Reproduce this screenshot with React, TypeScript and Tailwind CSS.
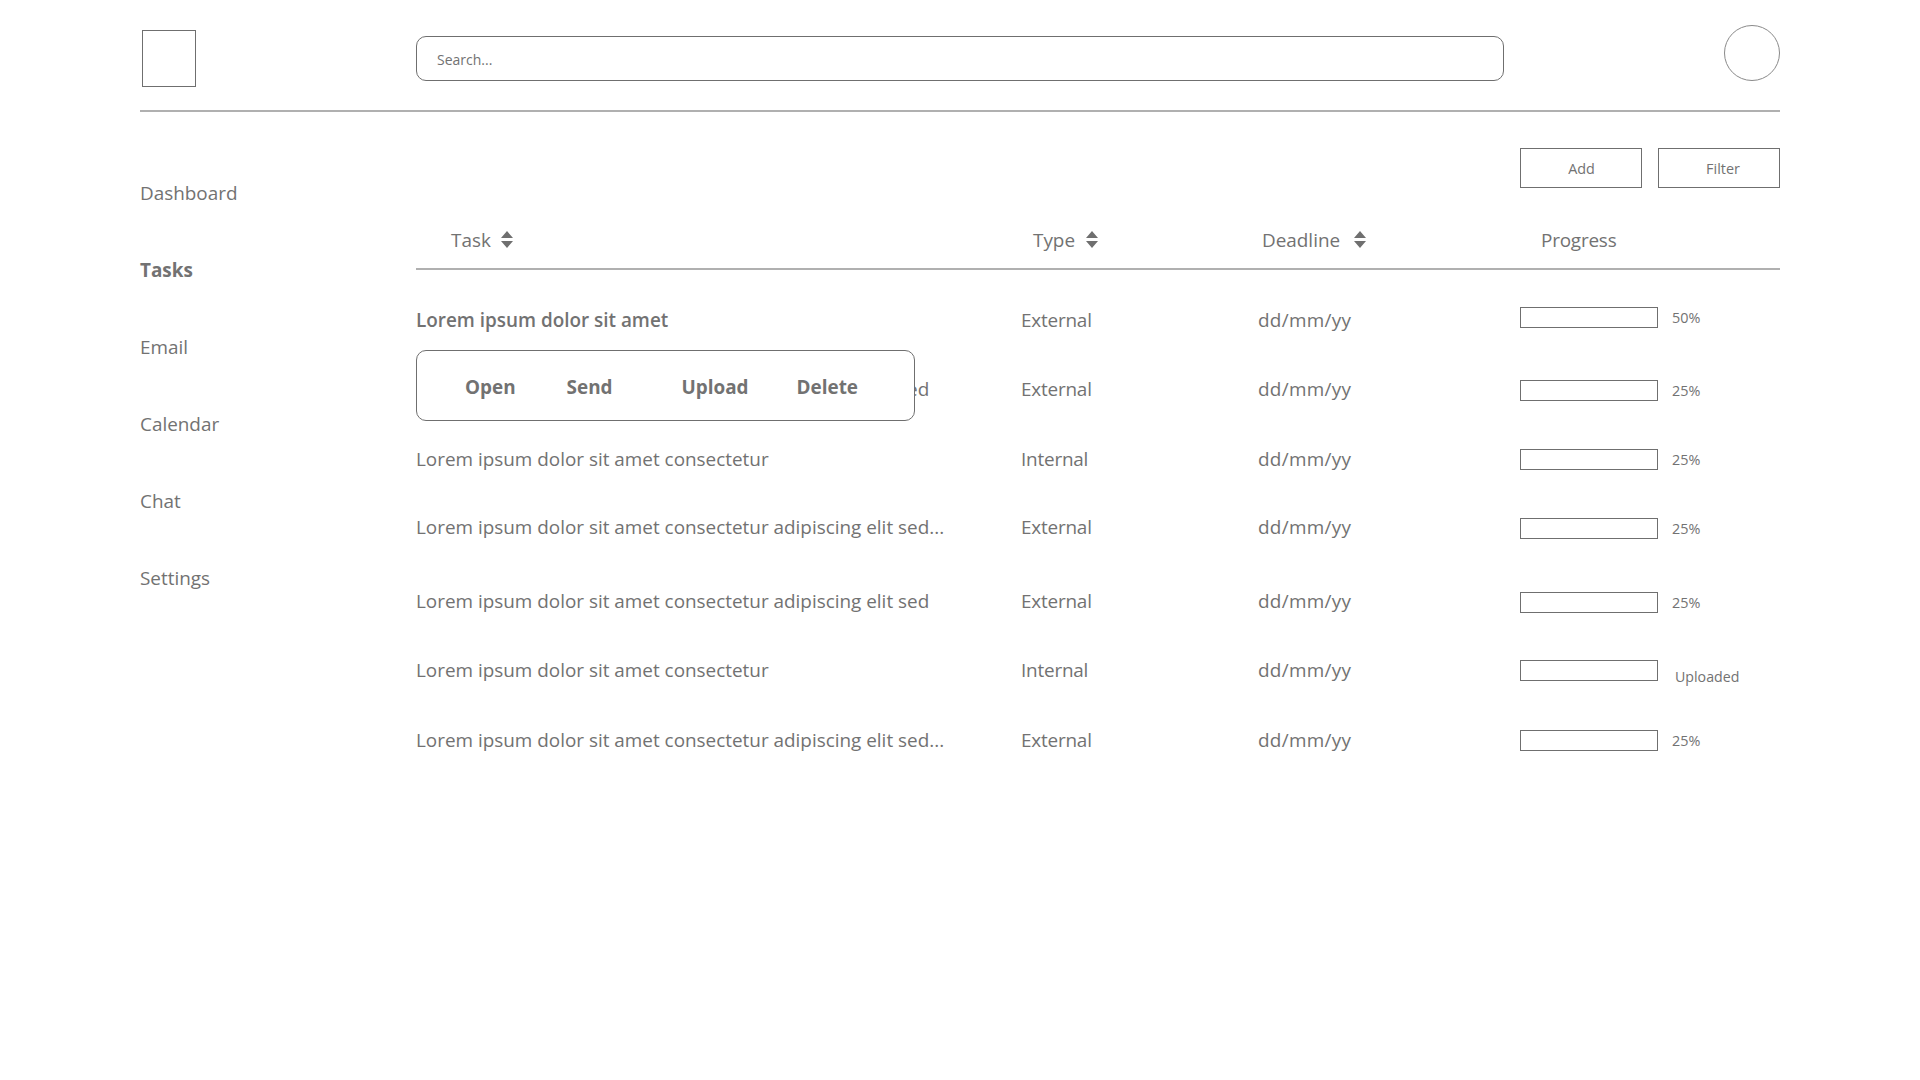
const font = { fontFamily: '"Open Sans", "Noto Sans", sans-serif' };

const navItems = ['Dashboard', 'Tasks', 'Email', 'Calendar', 'Chat', 'Settings'];

const rows = [
  { task: 'Lorem ipsum dolor sit amet', type: 'External', progress: '50%', h: 'h-[69px] pt-[2px]', bar: 'mb-[6px]', bold: true },
  { task: 'Lorem ipsum dolor sit amet consectetur adipiscing elit sed', type: 'External', progress: '25%', h: 'h-[70px]', bar: 'mt-[3px]' },
  { task: 'Lorem ipsum dolor sit amet consectetur', type: 'Internal', progress: '25%', h: 'h-[69px] pt-[2px]', bar: 'mt-[1px]' },
  { task: 'Lorem ipsum dolor sit amet consectetur adipiscing elit sed...', type: 'External', progress: '25%', h: 'h-[73px] pb-[4px]', bar: 'mt-[3px]' },
  { task: 'Lorem ipsum dolor sit amet consectetur adipiscing elit sed', type: 'External', progress: '25%', h: 'h-[70px]', bar: 'mt-[3px]' },
  { task: 'Lorem ipsum dolor sit amet consectetur', type: 'Internal', progress: 'Uploaded', h: 'h-[69px]', bar: 'mt-[1px]' },
  { task: 'Lorem ipsum dolor sit amet consectetur adipiscing elit sed...', type: 'External', progress: '25%', h: 'h-[70px]', bar: 'mt-[2px]' },
];

function SortIcon() {
  return (
    <svg width="12" height="17" viewBox="0 0 12 17" className="shrink-0">
      <path d="M6 0 L12 7 H0 Z M0 10 H12 L6 17 Z" fill="#6f6f6f" />
    </svg>
  );
}

export default function App() {
  return (
    <div className="w-[1920px] h-[1080px] bg-white px-[140px] text-[#727272]" style={font}>
      <header className="h-[112px] flex items-start border-b-2 border-[#b0b0b0]">
        <div className="w-[54px] h-[57px] ml-[2px] mt-[30px] border border-[#6f6f6f] shrink-0" />
        <div className="w-[1088px] h-[45px] ml-[220px] mt-[36px] border border-[#6f6f6f] rounded-[10px] flex items-center pl-[20px] pt-[1px] text-[14px]">
          Search...
        </div>
        <div className="w-[56px] h-[56px] ml-auto mt-[25px] border border-[#8a8a8a] rounded-full" />
      </header>

      <div className="flex">
        <aside className="w-[276px] shrink-0 pt-[43px] flex flex-col">
          {navItems.map((item) => (
            <div key={item} className={`h-[77px] flex items-center text-[18.9px] ${item === 'Tasks' ? 'font-bold' : ''}`}>
              {item}
            </div>
          ))}
        </aside>

        <main className="flex-1 pt-[36px]">
          <div className="flex justify-end gap-[16px]">
            <button className="w-[122px] h-[40px] pl-[1px] pt-[1px] border border-[#6f6f6f] text-[14.4px]">Add</button>
            <button className="w-[122px] h-[40px] pl-[8px] pt-[1px] border border-[#6f6f6f] text-[14.4px]">Filter</button>
          </div>

          <div className="h-[82px] pb-[14px] grid grid-cols-[605px_237px_262px_1fr] items-end border-b-2 border-[#b0b0b0] text-[18.9px]">
            <div className="pl-[35px] flex items-center gap-[10px]">Task <SortIcon /></div>
            <div className="pl-[12px] flex items-center gap-[11px]">Type <SortIcon /></div>
            <div className="pl-[4px] flex items-center gap-[14px]">Deadline <SortIcon /></div>
            <div className="pl-[21px] tracking-[-0.2px]">Progress</div>
          </div>

          <div className="pt-[15px]">
            {rows.map((row, i) => (
              <div key={i} className={`relative grid grid-cols-[605px_237px_262px_1fr] items-center text-[18.9px] ${row.h}`}>
                <div className={row.bold ? 'font-semibold' : ''}>{row.task}</div>
                <div className="w-[66px] text-center whitespace-nowrap tracking-[-0.2px]">{row.type}</div>
                <div className="tracking-[0.3px]">dd/mm/yy</div>
                <div className={`flex items-center ${row.bar}`}>
                  <div className="w-[138px] h-[21px] border border-[#6f6f6f]" />
                  <span className={row.progress === 'Uploaded' ? 'ml-[17px] mt-[12px] text-[14.2px]' : 'ml-[14px] text-[14.4px]'}>{row.progress}</span>
                </div>
                {i === 1 && (
                  <div className="absolute left-0 top-[-4px] w-[499px] h-[71px] pt-[3px] bg-white border border-[#6f6f6f] rounded-[10px] flex items-center font-bold">
                    <span className="ml-[48px]">Open</span>
                    <span className="ml-[51px]">Send</span>
                    <span className="ml-[69px]">Upload</span>
                    <span className="ml-[48px]">Delete</span>
                  </div>
                )}
              </div>
            ))}
          </div>
        </main>
      </div>
    </div>
  );
}
